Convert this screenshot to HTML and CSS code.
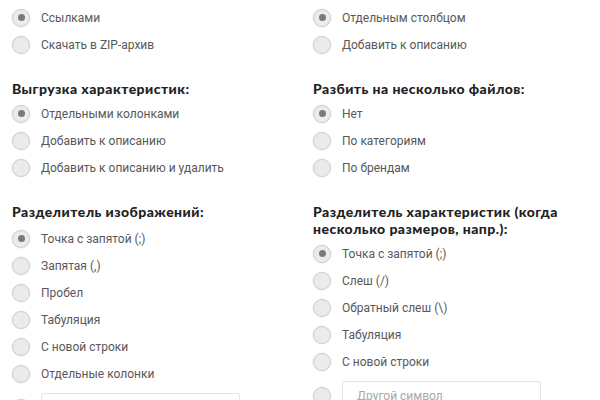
FILE: index.html
```html
<!DOCTYPE html>
<html lang="ru">
<head>
<meta charset="utf-8">
<title>Настройки выгрузки</title>
<link rel="stylesheet" href="styles.css">
</head>
<body>
<div class="grid">
  <div class="section">
    <label class="opt"><span class="radio checked"></span><span class="lbl">Ссылками</span></label>
    <label class="opt"><span class="radio"></span><span class="lbl">Скачать в ZIP-архив</span></label>
  </div>
  <div class="section">
    <label class="opt"><span class="radio checked"></span><span class="lbl">Отдельным столбцом</span></label>
    <label class="opt"><span class="radio"></span><span class="lbl">Добавить к описанию</span></label>
  </div>
  <div class="section">
    <div class="title">Выгрузка характеристик:</div>
    <label class="opt"><span class="radio checked"></span><span class="lbl">Отдельными колонками</span></label>
    <label class="opt"><span class="radio"></span><span class="lbl">Добавить к описанию</span></label>
    <label class="opt"><span class="radio"></span><span class="lbl">Добавить к описанию и удалить</span></label>
  </div>
  <div class="section">
    <div class="title">Разбить на несколько файлов:</div>
    <label class="opt"><span class="radio checked"></span><span class="lbl">Нет</span></label>
    <label class="opt"><span class="radio"></span><span class="lbl">По категориям</span></label>
    <label class="opt"><span class="radio"></span><span class="lbl">По брендам</span></label>
  </div>
  <div class="section">
    <div class="title">Разделитель изображений:</div>
    <label class="opt"><span class="radio checked"></span><span class="lbl">Точка с запятой (;)</span></label>
    <label class="opt"><span class="radio"></span><span class="lbl">Запятая (,)</span></label>
    <label class="opt"><span class="radio"></span><span class="lbl">Пробел</span></label>
    <label class="opt"><span class="radio"></span><span class="lbl">Табуляция</span></label>
    <label class="opt"><span class="radio"></span><span class="lbl">С новой строки</span></label>
    <label class="opt"><span class="radio"></span><span class="lbl">Отдельные колонки</span></label>
    <label class="opt opt-input"><span class="radio"></span><input class="field" type="text" placeholder="Другой символ"></label>
  </div>
  <div class="section">
    <div class="title">Разделитель характеристик (когда несколько размеров, напр.):</div>
    <label class="opt"><span class="radio checked"></span><span class="lbl">Точка с запятой (;)</span></label>
    <label class="opt"><span class="radio"></span><span class="lbl">Слеш (/)</span></label>
    <label class="opt"><span class="radio"></span><span class="lbl">Обратный слеш (\)</span></label>
    <label class="opt"><span class="radio"></span><span class="lbl">Табуляция</span></label>
    <label class="opt"><span class="radio"></span><span class="lbl">С новой строки</span></label>
    <label class="opt opt-input"><span class="radio"></span><input class="field" type="text" placeholder="Другой символ"></label>
  </div>
</div>
</body>
</html>
```
FILE: styles.css
```css
html, body {
  margin: 0;
  padding: 0;
  background: #ffffff;
  overflow: hidden;
}
body {
  font-family: Roboto, "Noto Sans", "Liberation Sans", sans-serif;
  font-size: 12px;
  color: #585858;
}
.grid {
  display: grid;
  grid-template-columns: 301px 1fr;
  row-gap: 22px;
  padding: 4px 10px 0 12px;
  align-items: start;
}
.section {
  display: flex;
  flex-direction: column;
}
.title {
  font-family: Lato, "DejaVu Sans", sans-serif;
  font-weight: 900;
  font-size: 14px;
  letter-spacing: 0.45px;
  line-height: 17px;
  color: #222222;
  margin-bottom: 3px;
  padding-right: 20px;
}
.section:nth-child(5) .title {
  margin-bottom: 5px;
}
.opt {
  display: flex;
  align-items: center;
  gap: 11px;
  height: 27px;
}
.radio {
  box-sizing: border-box;
  flex: 0 0 auto;
  width: 18px;
  height: 18px;
  border-radius: 50%;
  background: #ebebeb;
  border: 1px solid #cfcfcf;
  box-shadow: 0 0 2px rgba(0, 0, 0, 0.12);
  display: flex;
  align-items: center;
  justify-content: center;
}
.radio.checked::after {
  content: "";
  width: 7px;
  height: 7px;
  border-radius: 50%;
  background: #7a7a7a;
}
.lbl {
  font-size: 12px;
  line-height: 16px;
}
.opt-input {
  height: 30px;
  margin-top: 6px;
}
.field {
  box-sizing: border-box;
  width: 199px;
  height: 30px;
  border: 1px solid #e4e4e4;
  border-radius: 2px;
  padding: 0 14px;
  font-family: Roboto, "Noto Sans", sans-serif;
  font-size: 12px;
  color: #555555;
  background: #ffffff;
  outline: none;
}
.field::placeholder {
  color: #a8a8a8;
}
```
